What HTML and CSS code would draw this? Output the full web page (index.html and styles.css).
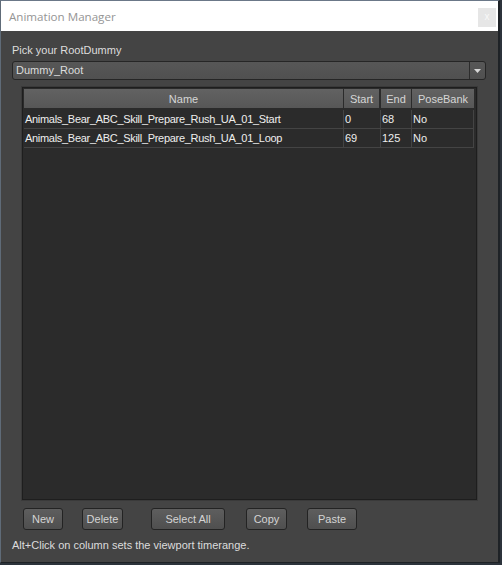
FILE: index.html
```html
<!DOCTYPE html>
<html>
<head>
<meta charset="utf-8">
<link rel="stylesheet" href="styles.css">
</head>
<body>
<div class="window">
  <div class="titlebar">
    <span class="title">Animation Manager</span>
    <span class="close">x</span>
  </div>
  <div class="content">
    <div class="label">Pick your RootDummy</div>
    <div class="combo">
      <span class="combo-text">Dummy_Root</span>
      <span class="combo-arrow"><svg width="7" height="4" viewBox="0 0 7 4"><path d="M0 0H7L3.5 4Z" fill="#d8d8d8"/></svg></span>
    </div>
    <div class="table">
      <div class="row head">
        <div class="cell c-name">Name</div>
        <div class="cell c-start">Start</div>
        <div class="cell c-end">End</div>
        <div class="cell c-pose">PoseBank</div>
      </div>
      <div class="row data">
        <div class="cell c-name">Animals_Bear_ABC_Skill_Prepare_Rush_UA_01_Start</div>
        <div class="cell c-start">0</div>
        <div class="cell c-end">68</div>
        <div class="cell c-pose">No</div>
      </div>
      <div class="row data">
        <div class="cell c-name">Animals_Bear_ABC_Skill_Prepare_Rush_UA_01_Loop</div>
        <div class="cell c-start">69</div>
        <div class="cell c-end">125</div>
        <div class="cell c-pose">No</div>
      </div>
    </div>
    <div class="buttons">
      <button class="btn b-new">New</button>
      <button class="btn b-del">Delete</button>
      <button class="btn b-sel">Select All</button>
      <button class="btn b-copy">Copy</button>
      <button class="btn b-paste">Paste</button>
    </div>
    <div class="hint">Alt+Click on column sets the viewport timerange.</div>
  </div>
</div>
</body>
</html>
```

FILE: styles.css
```css
html, body {
  margin: 0;
  padding: 0;
}
body {
  width: 502px;
  height: 565px;
  background: #2c333b;
  overflow: hidden;
  font-family: "Liberation Sans", Arial, sans-serif;
  font-size: 11px;
}
.window {
  box-sizing: border-box;
  margin: 0;
  width: 500px;
  height: 563px;
  border-top: 1px solid #6b7888;
  border-left: 1px solid #5f6b78;
  border-right: 2px solid #1e2226;
  border-bottom: 1px solid #1e2226;
  background: #444444;
  display: flex;
  flex-direction: column;
}
.titlebar {
  height: 30px;
  background: #ffffff;
  display: flex;
  align-items: flex-start;
  justify-content: space-between;
}
.title {
  font-family: "Open Sans", "Liberation Sans", sans-serif;
  font-size: 11.6px;
  color: #959595;
  margin: 7px 0 0 8px;
  line-height: 17px;
}
.close {
  width: 18px;
  height: 19px;
  margin: 7px 2px 0 0;
  background: #e6e6e6;
  color: #f8f8f8;
  font-size: 10px;
  line-height: 18px;
  text-align: center;
}
.content {
  padding: 12px 11px 0 11px;
  color: #dddddd;
}
.label {
  line-height: 14px;
  height: 14px;
}
.combo {
  box-sizing: border-box;
  margin-top: 4px;
  height: 19px;
  width: 474px;
  border: 1px solid #262626;
  border-radius: 3px;
  background: linear-gradient(#575757, #505050);
  display: flex;
  align-items: center;
}
.combo-text {
  flex: 1;
  padding-left: 3px;
  line-height: 17px;
}
.combo-arrow {
  width: 15px;
  height: 17px;
  border-left: 1px solid #2c2c2c;
  display: flex;
  align-items: center;
  justify-content: center;
}
.table {
  box-sizing: border-box;
  margin: 7px 0 0 10px;
  width: 455px;
  height: 413px;
  border: 1px solid #1e1e1e;
  padding: 1px;
  background: #2b2b2b;
  box-shadow: 0 0 0 1px #3a3a3a;
}
.row {
  display: flex;
}
.cell {
  box-sizing: border-box;
  white-space: nowrap;
  overflow: hidden;
}
.c-name { width: 320px; }
.c-start { width: 37px; }
.c-end { width: 31px; }
.c-pose { width: 63px; }
.head .cell {
  height: 21px;
  padding-top: 2px;
  line-height: 17px;
  text-align: center;
  color: #d6d6d6;
  background: linear-gradient(#626262, #575757);
  border-right: 1px solid #2b2b2b;
  border-bottom: 2px solid #2b2b2b;
}
.head .c-start { border-right-width: 2px; }
.head .c-pose { border-right: 0; width: 62px; }
.data .cell {
  height: 19px;
  padding-top: 1px;
  line-height: 17px;
  padding-left: 1px;
  color: #eeeeee;
  border-right: 1px solid #444444;
  border-bottom: 1px solid #444444;
}
.data .c-name { letter-spacing: -0.3px; }
.data .c-pose { width: 62px; border-right: 1px solid #444444; }
.buttons {
  display: flex;
  margin-top: 8px;
  padding-left: 11px;
  height: 22px;
}
.btn {
  box-sizing: border-box;
  height: 22px;
  padding: 0;
  border: 1px solid #232323;
  border-radius: 3px;
  background: linear-gradient(#5e5e5e, #4f4f4f);
  color: #d4d4d4;
  font-family: "Liberation Sans", Arial, sans-serif;
  font-size: 11px;
  line-height: 20px;
}
.b-new { width: 40px; }
.b-del { width: 41px; margin-left: 19px; }
.b-sel { width: 74px; margin-left: 28px; }
.b-copy { width: 41px; margin-left: 21px; }
.b-paste { width: 50px; margin-left: 20px; }
.hint {
  margin-top: 8px;
  line-height: 14px;
  color: #dcdcdc;
}
```
